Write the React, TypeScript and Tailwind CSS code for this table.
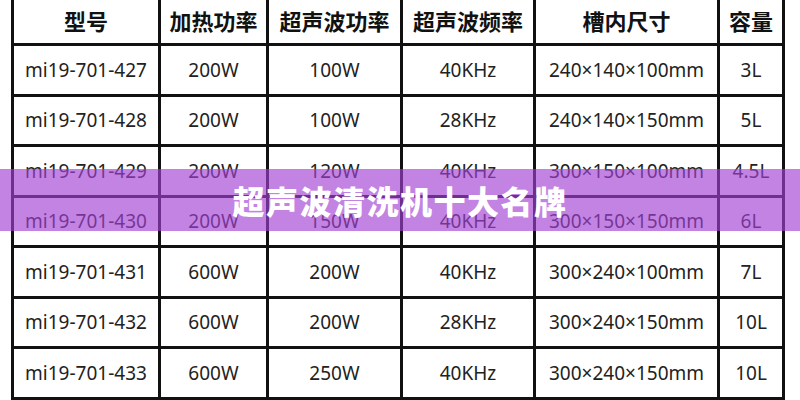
const headers = ["型号", "加热功率", "超声波功率", "超声波频率", "槽内尺寸", "容量"];

const rows = [
  ["mi19-701-427", "200W", "100W", "40KHz", "240×140×100mm", "3L"],
  ["mi19-701-428", "200W", "100W", "28KHz", "240×140×150mm", "5L"],
  ["mi19-701-429", "200W", "120W", "40KHz", "300×150×100mm", "4.5L"],
  ["mi19-701-430", "200W", "150W", "40KHz", "300×150×150mm", "6L"],
  ["mi19-701-431", "600W", "200W", "40KHz", "300×240×100mm", "7L"],
  ["mi19-701-432", "600W", "200W", "28KHz", "300×240×150mm", "10L"],
  ["mi19-701-433", "600W", "250W", "40KHz", "300×240×150mm", "10L"],
];

const App = () => {
  return (
    <main
      className="relative h-[400px] w-[800px] overflow-hidden bg-white"
      style={{ fontFamily: '"Noto Sans", "Noto Sans CJK SC", sans-serif' }}
    >
      <div className="ml-[11px] mt-[-7px] w-[774px] bg-[#111] p-[3px]">
        <div className="grid grid-cols-[144px_105px_131px_130px_181px_62px] grid-rows-[47px_48px_47px_48px_47px_48px_47px_48px] gap-[3px]">
          {headers.map((h) => (
            <div
              key={h}
              className="flex items-center justify-center bg-white pt-[2px] text-[22px] font-bold text-[#111]"
              style={{ fontFamily: '"Noto Sans CJK SC", sans-serif' }}
            >
              {h}
            </div>
          ))}
          {rows.map((row) =>
            row.map((cell, i) => (
              <div
                key={row[0] + i}
                className="flex items-center justify-center bg-white text-[19px] text-[#222]"
              >
                {cell}
              </div>
            ))
          )}
        </div>
      </div>

      <div className="absolute left-0 top-[169px] flex h-[62px] w-full items-center justify-center bg-[rgba(163,65,212,0.65)]">
        <h1
          className="text-[32px] font-black tracking-[1.5px] text-white"
          style={{ fontFamily: '"Noto Sans CJK SC", sans-serif' }}
        >
          超声波清洗机十大名牌
        </h1>
      </div>
    </main>
  );
};

export default App;
